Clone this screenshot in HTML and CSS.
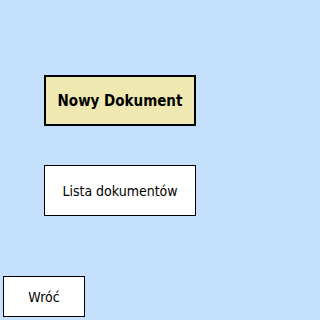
FILE: index.html
```html
<!DOCTYPE html>
<html>
<head>
<meta charset="utf-8">
<link rel="stylesheet" href="styles.css">
</head>
<body>
<div class="screen">
  <div class="menu">
    <button class="btn btn-primary">Nowy Dokument</button>
    <button class="btn btn-plain">Lista dokumentów</button>
  </div>
  <div class="footer">
    <button class="btn btn-back">Wróć</button>
  </div>
</div>
</body>
</html>
```
FILE: styles.css
```css
html, body {
  margin: 0;
  padding: 0;
}
body {
  background: #c4e0fc;
  font-family: "DejaVu Sans Condensed", "DejaVu Sans", Tahoma, sans-serif;
}
.screen {
  width: 240px;
  height: 320px;
  display: flex;
  flex-direction: column;
  box-sizing: border-box;
  padding: 75px 0 3px 0;
}
.menu {
  display: flex;
  flex-direction: column;
  gap: 39px;
  padding-left: 44px;
}
.btn {
  box-sizing: border-box;
  margin: 0;
  padding: 0;
  font-family: inherit;
  color: #000;
  background: #fff;
  border: 1px solid #000;
  border-radius: 0;
}
.btn-primary {
  width: 152px;
  height: 51px;
  background: #efe8b0;
  border: 2px solid #000;
  font-weight: bold;
  font-size: 15px;
}
.btn-plain {
  width: 152px;
  height: 51px;
  font-size: 14px;
}
.footer {
  margin-top: auto;
  padding-left: 3px;
}
.btn-back {
  width: 82px;
  height: 41px;
  font-size: 14px;
}
```
